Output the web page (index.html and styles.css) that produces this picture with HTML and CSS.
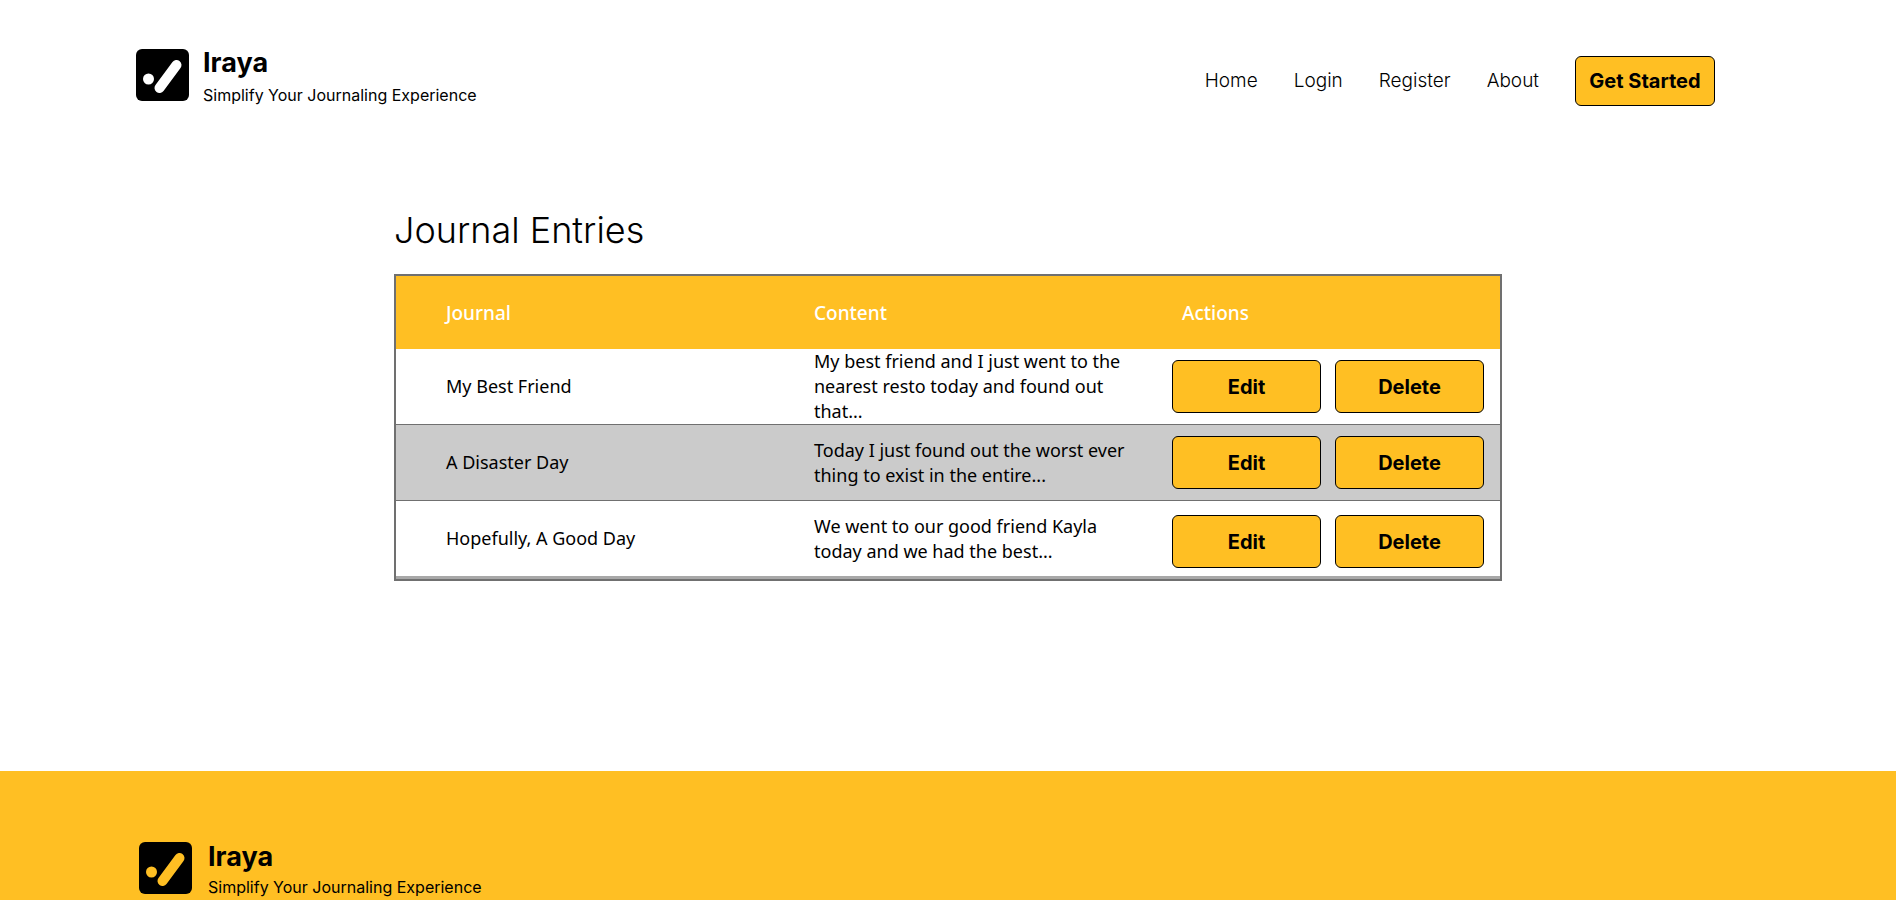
FILE: index.html
```html
<!DOCTYPE html>
<html lang="en">
<head>
<meta charset="utf-8">
<title>Iraya</title>
<link rel="stylesheet" href="styles.css">
</head>
<body>
<header class="site-header">
  <div class="brand">
    <svg class="brand-mark" viewBox="0 0 53 52" aria-hidden="true">
      <rect width="53" height="52" rx="6"/>
      <circle class="stroke-dot" cx="12.500" cy="30" r="5.500"/>
      <path class="stroke-line" d="M23.500 39 40.500 16"/>
    </svg>
    <div class="brand-text">
      <p class="brand-name">Iraya</p>
      <p class="brand-tagline">Simplify Your Journaling Experience</p>
    </div>
  </div>
  <nav class="site-nav">
    <a href="#home">Home</a>
    <a href="#login">Login</a>
    <a href="#register">Register</a>
    <a href="#about">About</a>
    <button class="button button-start" type="button">Get Started</button>
  </nav>
</header>
<main class="journal">
  <h1 class="journal-title">Journal Entries</h1>
  <table class="entries">
    <thead>
      <tr><th scope="col">Journal</th><th scope="col">Content</th><th scope="col">Actions</th></tr>
    </thead>
    <tbody>
      <tr>
        <td>My Best Friend</td>
        <td>My best friend and I just went to the nearest resto today and found out that...</td>
        <td class="actions"><div class="action-group"><button class="button" type="button">Edit</button><button class="button" type="button">Delete</button></div></td>
      </tr>
      <tr>
        <td>A Disaster Day</td>
        <td>Today I just found out the worst ever thing to exist in the entire...</td>
        <td class="actions"><div class="action-group"><button class="button" type="button">Edit</button><button class="button" type="button">Delete</button></div></td>
      </tr>
      <tr>
        <td>Hopefully, A Good Day</td>
        <td>We went to our good friend Kayla today and we had the best...</td>
        <td class="actions"><div class="action-group"><button class="button" type="button">Edit</button><button class="button" type="button">Delete</button></div></td>
      </tr>
    </tbody>
  </table>
</main>
<footer class="site-footer">
  <div class="brand">
    <svg class="brand-mark" viewBox="0 0 53 52" aria-hidden="true">
      <rect width="53" height="52" rx="6"/>
      <circle class="stroke-dot" cx="12.500" cy="30" r="5.500"/>
      <path class="stroke-line" d="M23.500 39 40.500 16"/>
    </svg>
    <div class="brand-text">
      <p class="brand-name">Iraya</p>
      <p class="brand-tagline">Simplify Your Journaling Experience</p>
    </div>
  </div>
</footer>
</body>
</html>
```
FILE: styles.css
```css
:root {
  --amber: #ffbf23;
  --line: #707070;
  --mark: #fff;
}
* { box-sizing: border-box; }
body {
  margin: 0;
  min-height: 100vh;
  display: flex;
  flex-direction: column;
  background: #fff;
  color: #000;
  font-family: "Noto Sans", sans-serif;
}
p, h1 { margin: 0; }
.site-header {
  display: flex;
  justify-content: space-between;
  align-items: flex-end;
  padding: 47px 181px 0 136px;
}
.brand { display: flex; gap: 14px; }
.brand-mark { width: 53px; height: 52px; margin-top: 2px; flex: none; }
.stroke-dot { fill: var(--mark); }
.stroke-line { stroke: var(--mark); stroke-width: 10; stroke-linecap: round; }
.brand-name {
  font: 700 27px/32px Inter, sans-serif;
}
.brand-tagline {
  font: 400 16px/32px Inter, sans-serif;
}
.site-nav { display: flex; align-items: center; gap: 36px; padding-bottom: 5px; }
.site-nav a {
  color: #000;
  text-decoration: none;
  font: 300 19px/24px Inter, sans-serif;
}
.button {
  width: 149px;
  height: 53px;
  padding: 0;
  border: 1px solid #000;
  border-radius: 6px;
  background: var(--amber);
  color: #000;
  font: 700 20px/24px Inter, sans-serif;
}
.button-start { width: 140px; height: 50px; }
.journal {
  width: 1108px;
  max-width: 100%;
  margin: 0 auto;
  padding: 97px 0 190px;
  flex: none;
}
.journal-title {
  margin-bottom: 22px;
  font: 300 36px/44px Inter, sans-serif;
}
.entries {
  width: 100%;
  table-layout: fixed;
  border-collapse: separate;
  border-spacing: 0;
  border: 2px solid var(--line);
}
.entries th {
  height: 73px;
  padding: 0 0 0 50px;
  background: var(--amber);
  color: #fff;
  text-align: left;
  font-size: 19px;
  font-weight: 500;
}
.entries td {
  height: 76px;
  padding: 0 0 0 50px;
  border-bottom: 1px solid var(--line);
  font-size: 18px;
  line-height: 25px;
}
.entries tbody tr:nth-child(even) { background: #cbcbcb; }
.entries tbody tr:last-child td { height: 78px; border-bottom: 3px solid #a8a8a8; }
.entries .actions { padding: 0 16px 0 40px; }
.entries tr:last-child .actions { padding-top: 6px; }
.action-group { display: flex; justify-content: space-between; }
.site-footer {
  --mark: var(--amber);
  flex: 1 0 auto;
  padding: 69px 139px 0;
  background: var(--amber);
}
.site-footer .brand { gap: 16px; }
.site-footer .brand-name { line-height: 34px; }
.site-footer .brand-tagline { line-height: 26px; }
```
